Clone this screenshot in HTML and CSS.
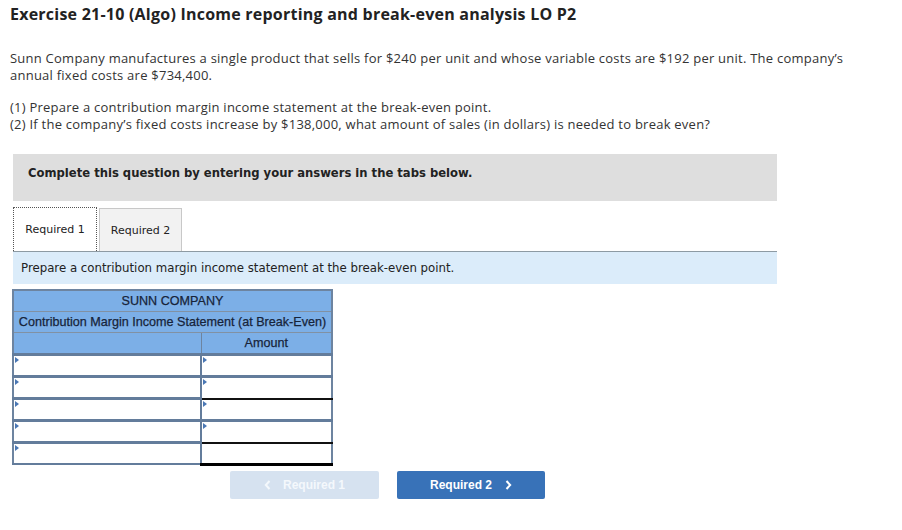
FILE: index.html
```html
<!DOCTYPE html>
<html>
<head>
<meta charset="utf-8">
<link rel="stylesheet" href="styles.css">
</head>
<body>
<div class="page">
  <h1 class="title">Exercise 21-10 (Algo) Income reporting and break-even analysis LO P2</h1>
  <p class="intro">Sunn Company manufactures a single product that sells for $240 per unit and whose variable costs are $192 per unit. The company’s annual fixed costs are $734,400.</p>
  <p class="intro">(1) Prepare a contribution margin income statement at the break-even point.<br>(2) If the company’s fixed costs increase by $138,000, what amount of sales (in dollars) is needed to break even?</p>

  <div class="notice">Complete this question by entering your answers in the tabs below.</div>

  <div class="tabs">
    <div class="tab active">Required 1</div>
    <div class="tab">Required 2</div>
  </div>
  <div class="instr">Prepare a contribution margin income statement at the break-even point.</div>

  <table class="stmt">
    <tr class="hd"><td colspan="2">SUNN COMPANY</td></tr>
    <tr class="hd"><td colspan="2">Contribution Margin Income Statement (at Break-Even)</td></tr>
    <tr class="hd"><td class="lab"></td><td class="amt">Amount</td></tr>
    <tr class="in"><td class="lab"><span class="tri"></span></td><td class="amt"><span class="tri"></span></td></tr>
    <tr class="in"><td class="lab"><span class="tri"></span></td><td class="amt"><span class="tri"></span></td></tr>
    <tr class="in"><td class="lab"><span class="tri"></span></td><td class="amt total"><span class="tri"></span></td></tr>
    <tr class="in"><td class="lab"><span class="tri"></span></td><td class="amt"><span class="tri"></span></td></tr>
    <tr class="in last"><td class="lab"><span class="tri"></span></td><td class="amt total dbl"></td></tr>
  </table>

  <div class="nav">
    <div class="btn prev"><svg class="chev" width="7" height="10" viewBox="0 0 7 10"><path d="M5.5 1 L1.8 5 L5.5 9" fill="none" stroke="currentColor" stroke-width="2"/></svg>Required 1</div>
    <div class="btn next">Required 2<svg class="chev" width="7" height="10" viewBox="0 0 7 10"><path d="M1.5 1 L5.2 5 L1.5 9" fill="none" stroke="currentColor" stroke-width="2"/></svg></div>
  </div>
</div>
</body>
</html>
```

FILE: styles.css
```css
html, body {
  margin: 0;
  padding: 0;
  background: #fff;
}
.page {
  padding: 5px 0 0 10px;
  font-family: "Open Sans", "Lato", sans-serif;
  color: #333;
}
.title {
  margin: 0;
  font-size: 16px;
  font-weight: 700;
  color: #222;
  line-height: 18px;
  letter-spacing: 0.23px;
}
.intro {
  margin: 0;
  font-size: 13px;
  line-height: 17px;
  width: 845px;
  letter-spacing: 0.24px;
}
.title + .intro {
  margin-top: 27px;
}
.intro + .intro {
  margin-top: 15px;
}
.notice {
  margin: 21px 0 0 3px;
  height: 47px;
  box-sizing: border-box;
  background: #dedede;
  padding: 11px 9px 0 15px;
  font-family: "DejaVu Sans", Verdana, sans-serif;
  font-weight: 700;
  font-size: 11.6px;
  line-height: 16px;
  color: #222;
  width: 764px;
}
.tabs {
  display: flex;
  margin: 6px 0 0 3px;
  gap: 2px;
  align-items: flex-end;
}
.tab {
  font-family: "DejaVu Sans", Verdana, sans-serif;
  font-size: 11px;
  color: #222;
  height: 43px;
  box-sizing: border-box;
  display: flex;
  align-items: center;
  justify-content: center;
  background: #f2f2f2;
  border: 1px solid #c8c8c8;
  border-bottom: none;
  width: 83px;
}
.tab.active {
  background: #fff;
  border: 1px dotted #555;
  border-bottom: none;
  height: 44px;
  width: 84px;
}
.instr {
  margin-left: 3px;
  width: 764px;
  height: 33px;
  box-sizing: border-box;
  background: #dbecfa;
  border-top: 1px solid #8d9aa3;
  padding-left: 8px;
  display: flex;
  align-items: center;
  font-family: "DejaVu Sans", Verdana, sans-serif;
  font-size: 11.75px;
  color: #222;
}
.stmt {
  margin: 5px 0 0 2px;
  border-collapse: collapse;
  width: 321px;
  font-family: "Liberation Sans", Arial, sans-serif;
  font-size: 12.6px;
  color: #17243a;
  border: 2px solid #6d84a0;
}
.stmt td {
  padding: 0;
}
.hd td {
  background: #7cafe7;
  height: 20px;
  text-align: center;
  border-bottom: 1px solid #8191a3;
  border-top: 1px solid #8191a3;
  -webkit-text-stroke: 0.25px #17243a;
}
.hd td.lab {
  border-right: 1px solid #6d84a0;
}
.in td {
  background: #fff;
  height: 19px;
  border-top: 3px solid #637c9b;
  position: relative;
  vertical-align: top;
}
.in td.lab {
  width: 186px;
  border-right: 2px solid #637c9b;
}
.in.last td {
  border-bottom: 2px solid #637c9b;
}
.in td.total {
  border-top: 2px solid #111;
}
.in td.dbl {
  border-bottom: 3px solid #000;
}
.tri {
  position: absolute;
  left: 1px;
  top: 1px;
  width: 0;
  height: 0;
  border-top: 3px solid transparent;
  border-bottom: 3px solid transparent;
  border-left: 4px solid #4a77b4;
}
.nav {
  display: flex;
  gap: 18px;
  margin: 5px 0 0 220px;
}
.btn {
  width: 149px;
  height: 28px;
  border-radius: 2px;
  display: flex;
  align-items: center;
  justify-content: center;
  font-family: "Liberation Sans", Arial, sans-serif;
  font-weight: 700;
  font-size: 12px;
  color: #fff;
  gap: 12px;
}
.btn.prev {
  background: #d6e2f0;
  color: #f4f8fc;
}
.btn.next {
  background: #3872b8;
  width: 148px;
  gap: 13px;
}
.chev {
  display: block;
}
```
